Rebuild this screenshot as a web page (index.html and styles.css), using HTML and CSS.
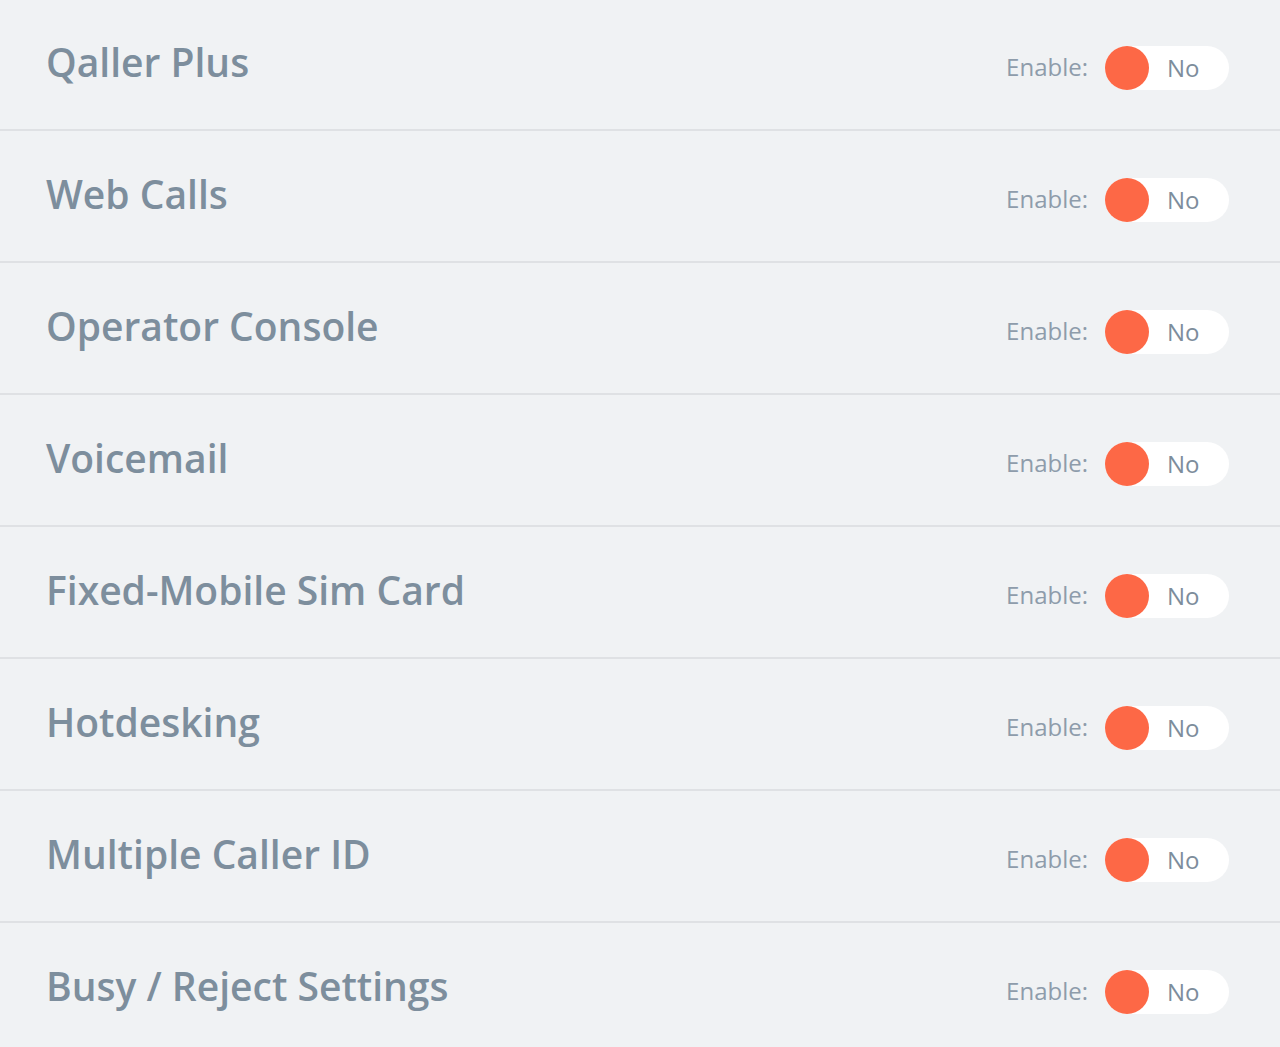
FILE: index.html
```html
<!DOCTYPE html>
<html>
<head>
<meta charset="utf-8">
<link rel="stylesheet" href="styles.css">
</head>
<body>
<div class="list">
  <div class="row"><div class="title">Qaller Plus</div><div class="ctl"><span class="lbl">Enable:</span><span class="toggle"><span class="knob"></span><span class="val">No</span></span></div></div>
  <div class="row"><div class="title">Web Calls</div><div class="ctl"><span class="lbl">Enable:</span><span class="toggle"><span class="knob"></span><span class="val">No</span></span></div></div>
  <div class="row"><div class="title">Operator Console</div><div class="ctl"><span class="lbl">Enable:</span><span class="toggle"><span class="knob"></span><span class="val">No</span></span></div></div>
  <div class="row"><div class="title">Voicemail</div><div class="ctl"><span class="lbl">Enable:</span><span class="toggle"><span class="knob"></span><span class="val">No</span></span></div></div>
  <div class="row"><div class="title">Fixed-Mobile Sim Card</div><div class="ctl"><span class="lbl">Enable:</span><span class="toggle"><span class="knob"></span><span class="val">No</span></span></div></div>
  <div class="row"><div class="title">Hotdesking</div><div class="ctl"><span class="lbl">Enable:</span><span class="toggle"><span class="knob"></span><span class="val">No</span></span></div></div>
  <div class="row"><div class="title">Multiple Caller ID</div><div class="ctl"><span class="lbl">Enable:</span><span class="toggle"><span class="knob"></span><span class="val">No</span></span></div></div>
  <div class="row"><div class="title">Busy / Reject Settings</div><div class="ctl"><span class="lbl">Enable:</span><span class="toggle"><span class="knob"></span><span class="val">No</span></span></div></div>
</div>
</body>
</html>
```
FILE: styles.css
```css
html, body {
  margin: 0;
  padding: 0;
  background: #f0f2f4;
  overflow: hidden;
}
body {
  font-family: "Open Sans", "Noto Sans", sans-serif;
  color: #7d8d9c;
}
.list {
  margin-top: -1px;
}
.row {
  height: 130px;
  border-bottom: 2px solid #dfe1e4;
  display: flex;
  justify-content: space-between;
  align-items: flex-start;
  padding: 0 51px 0 46px;
  box-sizing: content-box;
}
.title {
  font-size: 39px;
  font-weight: 600;
  line-height: 54px;
  margin-top: 36px;
  color: #7d8e9d;
}
.ctl {
  display: flex;
  align-items: center;
  margin-top: 47px;
}
.lbl {
  font-size: 24px;
  color: #8e9cab;
  margin-right: 17px;
  padding-bottom: 3px;
}
.toggle {
  display: flex;
  align-items: center;
  width: 124px;
  height: 44px;
  border-radius: 22px;
  background: #ffffff;
}
.knob {
  width: 44px;
  height: 44px;
  border-radius: 50%;
  background: #fd6846;
}
.val {
  font-size: 24px;
  color: #7d8d9c;
  margin-left: 18px;
  padding-bottom: 2px;
}
```
